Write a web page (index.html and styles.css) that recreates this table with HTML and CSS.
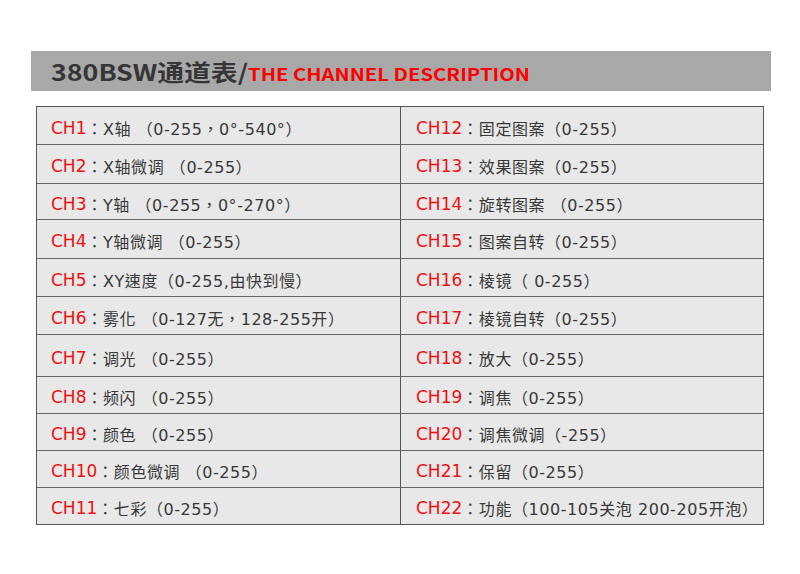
FILE: index.html
```html
<!DOCTYPE html>
<html lang="zh-CN">
<head>
<meta charset="utf-8">
<title>380BSW通道表</title>
<link rel="stylesheet" href="styles.css">
</head>
<body>
<div class="page">
  <div class="title-bar">
    <h1 class="title"><span class="title-main">380BSW通道表/</span><span class="title-sub">THE CHANNEL DESCRIPTION</span></h1>
  </div>
  <div class="channels">
    <div class="cell left"><span class="ch">CH1</span>：X轴 （0-255，0°-540°）</div>
    <div class="cell right"><span class="ch">CH12</span>：固定图案（0-255）</div>
    <div class="cell left"><span class="ch">CH2</span>：X轴微调 （0-255）</div>
    <div class="cell right"><span class="ch">CH13</span>：效果图案（0-255）</div>
    <div class="cell left"><span class="ch">CH3</span>：Y轴 （0-255，0°-270°）</div>
    <div class="cell right"><span class="ch">CH14</span>：旋转图案 （0-255）</div>
    <div class="cell left"><span class="ch">CH4</span>：Y轴微调 （0-255）</div>
    <div class="cell right"><span class="ch">CH15</span>：图案自转（0-255）</div>
    <div class="cell left"><span class="ch">CH5</span>：XY速度（0-255,由快到慢）</div>
    <div class="cell right"><span class="ch">CH16</span>：棱镜（ 0-255）</div>
    <div class="cell left"><span class="ch">CH6</span>：雾化 （0-127无，128-255开）</div>
    <div class="cell right"><span class="ch">CH17</span>：棱镜自转（0-255）</div>
    <div class="cell left"><span class="ch">CH7</span>：调光 （0-255）</div>
    <div class="cell right"><span class="ch">CH18</span>：放大（0-255）</div>
    <div class="cell left"><span class="ch">CH8</span>：频闪 （0-255）</div>
    <div class="cell right"><span class="ch">CH19</span>：调焦（0-255）</div>
    <div class="cell left"><span class="ch">CH9</span>：颜色 （0-255）</div>
    <div class="cell right"><span class="ch">CH20</span>：调焦微调（-255）</div>
    <div class="cell left"><span class="ch">CH10</span>：颜色微调 （0-255）</div>
    <div class="cell right"><span class="ch">CH21</span>：保留（0-255）</div>
    <div class="cell left last"><span class="ch">CH11</span>：七彩（0-255）</div>
    <div class="cell right last"><span class="ch">CH22</span>：功能（100-105关泡 200-205开泡）</div>
  </div>
</div>
</body>
</html>
```
FILE: styles.css
```css
html, body {
  margin: 0;
  padding: 0;
  background: #ffffff;
}

.page {
  width: 800px;
  height: 574px;
  padding-top: 51px;
  box-sizing: border-box;
}

.title-bar {
  margin-left: 31px;
  width: 740px;
  height: 40px;
  background: #a8a8a9;
  display: flex;
  align-items: center;
  padding-left: 20px;
  padding-bottom: 8px;
  box-sizing: border-box;
  white-space: nowrap;
  overflow: hidden;
}

.title {
  margin: 0;
  font-family: "Noto Sans CJK SC", sans-serif;
  font-weight: 700;
  line-height: 1;
  transform: scaleX(1.19);
  transform-origin: left center;
}

.title-main {
  font-size: 22.5px;
  color: #353535;
}

.title-sub {
  font-size: 17px;
  color: #ff0000;
}

.channels {
  margin-top: 15px;
  margin-left: 36px;
  width: 728px;
  box-sizing: border-box;
  border: 1px solid #555555;
  display: grid;
  grid-template-columns: 364px 1fr;
  grid-template-rows: 38px 39px 36px 39px 38px 38px 42px 37px 37px 37px 36px;
  background: #e8e8e8;
}

.cell {
  display: flex;
  align-items: center;
  box-sizing: border-box;
  padding-left: 14px;
  padding-top: 4px;
  border-bottom: 1px solid #666666;
  font-family: "DejaVu Sans", "Noto Sans CJK TC", sans-serif;
  font-feature-settings: "locl" 0;
  font-size: 16px;
  letter-spacing: 0.55px;
  color: #383838;
  white-space: nowrap;
}

.cell.left {
  border-right: 1px solid #555555;
}

.cell.right {
  padding-left: 15px;
}

.cell.last {
  border-bottom: none;
}

.ch {
  color: #ee1111;
  font-size: 17px;
  letter-spacing: 0;
}
```
